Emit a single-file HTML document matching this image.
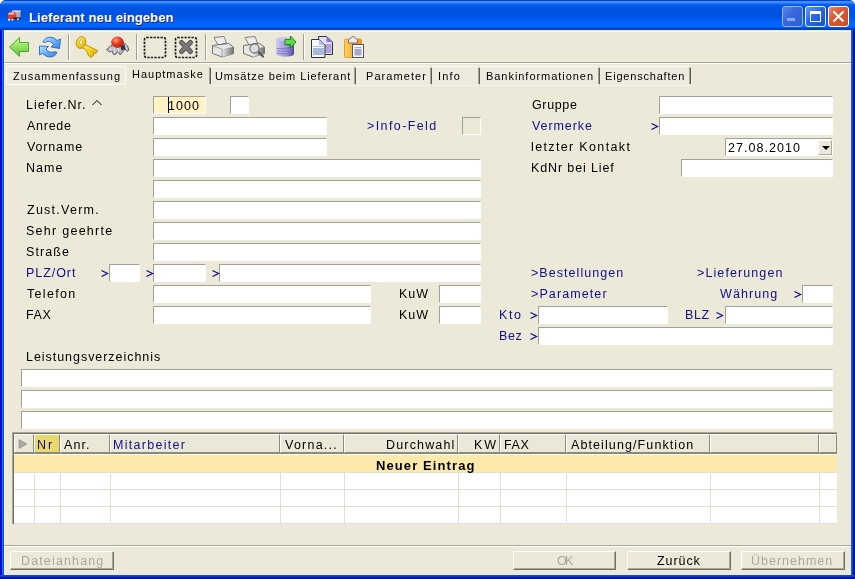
<!DOCTYPE html>
<html><head><meta charset="utf-8"><title>Lieferant neu eingeben</title>
<style>
html,body{margin:0;padding:0;width:855px;height:579px;overflow:hidden;background:#fff}
#win{position:absolute;left:0;top:0;width:855px;height:579px;background:#0842d6;border-radius:6px 6px 0 0;overflow:hidden}
#title{position:absolute;left:0;top:0;width:855px;height:30px;background:linear-gradient(180deg,#0a3fc8 0px,#0a3fc8 1px,#3d8dff 1px,#3d8dff 3px,#0b5ff2 4px,#0055e5 7px,#0052de 14px,#0058ea 19px,#0066ff 22px,#0066ff 27px,#0048d0 28px,#003cc0 30px)}
#client{position:absolute;left:4px;top:30px;width:847px;height:545px;background:#ECE9D8}
.t{position:absolute;font-family:"Liberation Sans",sans-serif;font-size:12.5px;letter-spacing:1.1px;line-height:14px;white-space:nowrap;color:#000;will-change:transform}
.tbold{font-weight:bold;font-size:13px}
.tt{position:absolute;font-family:"Liberation Sans",sans-serif;font-size:11px;letter-spacing:0.95px;line-height:14px;white-space:nowrap;color:#000;will-change:transform}
.i{position:absolute;height:18px;box-sizing:border-box;border-top:1px solid #a2a195;border-left:1px solid #a2a195;border-right:1px solid #fff;border-bottom:1px solid #fff;background:#fff}
.tb{position:absolute;top:0}
.sep{position:absolute;width:1px;top:34px;height:26px;background:#a09e92;border-right:1px solid #fff}
.btn{position:absolute;top:551px;height:19px;box-sizing:border-box;border:1px solid;border-color:#fff #716f64 #716f64 #fff;box-shadow:inset -1px -1px #aca899}
.tab{position:absolute;top:66px;height:19px;box-sizing:border-box;border-top:1px solid #fff}
.tdiv{position:absolute;top:67px;width:1px;height:17px;background:#77756a}
.gh{position:absolute;top:434px;height:19px;box-sizing:border-box;border:1px solid;border-color:#fff #8d8b80 #8d8b80 #fff;background:#ebe8d7}
.gv{position:absolute;top:472px;width:1px;height:52px;background:#e2e0d4}
.gr{position:absolute;left:14px;width:823px;height:1px;background:#e2e0d4}
</style></head><body><div id="win">
<div id="title"></div>
<div id="client"></div>
<div style="position:absolute;left:0;top:30px;width:4px;height:549px;background:linear-gradient(90deg,#0010d0 0,#0010d0 2px,#2266f4 2px,#2266f4 3px,#1152c4 3px,#1152c4 4px)"></div>
<div style="position:absolute;left:851px;top:30px;width:4px;height:549px;background:linear-gradient(90deg,#2a58c4 0,#2a58c4 1px,#1444c0 1px,#1444c0 2px,#0018a0 2px)"></div>
<div style="position:absolute;left:0;top:575px;width:855px;height:4px;background:linear-gradient(180deg,#1a48b8 0,#1a48b8 1px,#1438b8 1px,#1438b8 2px,#0018a0 2px)"></div>
<div style="position:absolute;left:4px;top:30px;width:1px;height:545px;background:#e8f2ff"></div>
<div style="position:absolute;left:850px;top:30px;width:1px;height:545px;background:#e0f0ff"></div>
<div style="position:absolute;left:849px;top:30px;width:1px;height:544px;background:#e6e6f0"></div>
<div style="position:absolute;left:4px;top:574px;width:847px;height:1px;background:#e0f0ff"></div>
<div style="position:absolute;left:5px;top:573px;width:845px;height:1px;background:#e6e6f0"></div>

<div style="position:absolute;left:29px;top:10px;font-family:'Liberation Sans',sans-serif;font-weight:bold;font-size:13px;letter-spacing:0.1px;line-height:16px;color:#fff;text-shadow:1px 1px #0a1e8c;white-space:nowrap">Lieferant neu eingeben</div>
<svg style="position:absolute;left:4px;top:6px" width="22" height="20" viewBox="4 6 22 20">
<rect x="12" y="10.5" width="8.5" height="7" fill="#b4aeb0"/><rect x="12" y="10.5" width="8.5" height="1.5" fill="#d8d4e0"/>
<path d="M8 13 L12 11.5 L15 12 L16.5 16 L16.5 19.5 L8 19.5 Z" fill="#d8402c"/>
<path d="M8.5 13 L12 12 L14 12.5 L14.5 14.5 L8.5 15 Z" fill="#e8b0b0"/>
<path d="M13 17.5 L21 17.5 L20 19.5 L14 19.5 Z" fill="#3a2020"/>
<rect x="8" y="19" width="2" height="1.5" fill="#fff"/><rect x="11.5" y="19" width="2" height="1.5" fill="#f0e0e0"/><rect x="17" y="18.5" width="2" height="1.2" fill="#fff"/>
</svg>
<div style="position:absolute;left:782px;top:6px;width:21px;height:21px;box-sizing:border-box;border:1px solid #98b4ee;border-radius:3px;background:linear-gradient(135deg,#5a86e6 0%,#3a68dc 40%,#2c5cd6 100%)"><div style="position:absolute;left:4px;top:11px;width:8px;height:3px;background:#8aa4ea"></div></div>
<div style="position:absolute;left:805px;top:6px;width:21px;height:21px;box-sizing:border-box;border:1px solid #e8f4ff;border-radius:3px;background:linear-gradient(135deg,#6a9af6 0%,#2a66ea 45%,#0a50e0 100%)"><div style="position:absolute;left:4px;top:4px;width:11px;height:11px;box-sizing:border-box;border:1px solid #fff;border-top-width:3px"></div></div>
<div style="position:absolute;left:828px;top:6px;width:21px;height:21px;box-sizing:border-box;border:1px solid #fff;border-radius:3px;background:linear-gradient(135deg,#ec8a68 0%,#dc5a34 40%,#d04820 100%)"><svg style="position:absolute;left:0;top:0" width="19" height="19"><path d="M4.5 4.5 L14.5 14.5 M14.5 4.5 L4.5 14.5" stroke="#fff" stroke-width="2" /></svg></div>
<div style="position:absolute;left:4px;top:31px;width:847px;height:1px;background:#fff;opacity:.6"></div>
<div style="position:absolute;left:4px;top:62px;width:847px;height:1px;background:#aca899"></div>
<div style="position:absolute;left:4px;top:63px;width:847px;height:1px;background:#fff"></div>
<div class="sep" style="left:68px"></div>
<div class="sep" style="left:136px"></div>
<div class="sep" style="left:205px"></div>
<div class="sep" style="left:303px"></div>

<svg style="position:absolute;left:4px;top:34px" width="28" height="26" viewBox="4 34 28 26">
<defs><linearGradient id="ga" x1="0" y1="0" x2="0" y2="1"><stop offset="0" stop-color="#c8f8a0"/><stop offset="0.5" stop-color="#90e060"/><stop offset="1" stop-color="#58c038"/></linearGradient></defs>
<path d="M9.5 47 L19.5 37.5 L19.5 42.5 L28.5 42.5 L28.5 51.5 L19.5 51.5 L19.5 56.5 Z" fill="url(#ga)" stroke="#4aa82a" stroke-width="1"/>
</svg>
<svg style="position:absolute;left:36px;top:34px" width="28" height="26" viewBox="0 0 28 26">
<defs><linearGradient id="gb" x1="0" y1="0" x2="1" y2="1"><stop offset="0" stop-color="#c0e6ff"/><stop offset="0.55" stop-color="#62acf8"/><stop offset="1" stop-color="#3080e0"/></linearGradient></defs>
<path d="M7 8 C9 3 16 1 21 6.5 L24.5 5 L23.5 14.5 L15 13 L17.5 10.5 C15 7 11 6.5 9.5 8.5 Z" fill="url(#gb)" stroke="#2a66c0" stroke-width="0.9"/>
<path d="M21 18.5 C19 23.5 12 25 6.5 19.5 L3.5 21 L3.5 12 L12.5 12.5 L10 15 C12 18.5 16 19 18.5 17.5 Z" fill="url(#gb)" stroke="#2a66c0" stroke-width="0.9"/>
</svg>
<svg style="position:absolute;left:72px;top:34px" width="28" height="26" viewBox="0 0 28 26">
<defs><linearGradient id="gk" x1="0" y1="0" x2="1" y2="1"><stop offset="0" stop-color="#fff27a"/><stop offset="0.5" stop-color="#f6d21c"/><stop offset="1" stop-color="#d8a808"/></linearGradient></defs>
<path d="M11 9.5 L25.5 16.5 L24 19.5 L21.5 18.5 L21.5 21.5 L18.5 23.5 L16.5 21.5 L15.5 19.5 L14.5 16.5 L10 13.5 Z" fill="url(#gk)" stroke="#b88a08" stroke-width="0.9"/>
<ellipse cx="9" cy="8.5" rx="4.6" ry="6" transform="rotate(20 9 8.5)" fill="url(#gk)" stroke="#b88a08" stroke-width="0.9"/>
<ellipse cx="9" cy="8.2" rx="1.6" ry="2.8" transform="rotate(20 9 8.2)" fill="#f8f0c0" stroke="#c89a10" stroke-width="0.6"/>
</svg>
<svg style="position:absolute;left:104px;top:34px" width="28" height="26" viewBox="0 0 28 26">
<defs><radialGradient id="gr" cx="0.35" cy="0.3" r="0.7"><stop offset="0" stop-color="#ffa080"/><stop offset="0.5" stop-color="#f04020"/><stop offset="1" stop-color="#c02010"/></radialGradient></defs>
<path d="M2.5 15.5 L6 12.5 L9 10.5 L13 12 L17 10 L20 8.5 L23.5 12 L25 16 L23 17.5 L21 15 L19.5 17 L16 21 L14 17 L12 20 L9.5 20.5 L8 17 L5.5 18 Z" fill="#b8b8c0" stroke="#404048" stroke-width="0.8"/>
<path d="M6 13.5 L7.5 17 M10 12 L10.5 19 M14 13 L14.5 18 M18 11 L19 15.5 M21 10.5 L23 15" stroke="#f0f0f4" stroke-width="0.9"/>
<path d="M16.5 12 L20.5 10 L21.5 15 L17.5 16.5 Z" fill="#303040"/>
<ellipse cx="13.5" cy="8.2" rx="6" ry="5.3" fill="url(#gr)" stroke="#a02818" stroke-width="0.5"/>
</svg>
<svg style="position:absolute;left:143px;top:36px" width="24" height="23" viewBox="0 0 24 23">
<rect x="1.5" y="1.5" width="21" height="20" rx="2" fill="none" stroke="#1a1a1a" stroke-width="1.7" stroke-dasharray="2.3 1.2"/>
</svg>
<svg style="position:absolute;left:174px;top:36px" width="24" height="23" viewBox="0 0 24 23">
<rect x="1.5" y="1.5" width="21" height="20" rx="2" fill="none" stroke="#1a1a1a" stroke-width="1.7" stroke-dasharray="2.3 1.2"/>
<path d="M7.5 6.5 L16.5 15.5 M16.5 6.5 L7.5 15.5" stroke="#555" stroke-width="5" stroke-linecap="round"/>
<path d="M7.5 6.5 L16.5 15.5 M16.5 6.5 L7.5 15.5" stroke="#7a7a7a" stroke-width="3" stroke-linecap="round"/>
</svg>
<svg style="position:absolute;left:209px;top:34px" width="28" height="26" viewBox="0 0 28 26">
<defs><linearGradient id="gp" x1="0" y1="0" x2="1" y2="0"><stop offset="0" stop-color="#e8e8e8"/><stop offset="1" stop-color="#707070"/></linearGradient></defs>
<path d="M5 3.5 L15 2.5 L17.5 9 L9 11 Z" fill="#ececec" stroke="#777" stroke-width="0.9"/>
<path d="M3.5 11.5 L19.5 9.5 L24.5 13 L24.5 19.5 L13 23 L3.5 19.5 Z" fill="#e6e6e6" stroke="#666" stroke-width="0.9"/>
<path d="M13 15 L24.5 13 L24.5 19.5 L13 23 Z" fill="url(#gp)"/>
<path d="M3.5 12 L13 15 L13 23" fill="none" stroke="#888" stroke-width="0.7"/>
</svg>
<svg style="position:absolute;left:240px;top:34px" width="28" height="26" viewBox="0 0 28 26">
<path d="M5 3.5 L15 2.5 L17.5 9 L9 11 Z" fill="#ececec" stroke="#777" stroke-width="0.9"/>
<path d="M3.5 11.5 L19.5 9.5 L24.5 13 L24.5 19.5 L13 23 L3.5 19.5 Z" fill="#e6e6e6" stroke="#666" stroke-width="0.9"/>
<path d="M13 15 L24.5 13 L24.5 19.5 L13 23 Z" fill="url(#gp)"/>
<path d="M19 18.5 L23 22.5" stroke="#555" stroke-width="2.2" stroke-linecap="round"/>
<circle cx="14.5" cy="14.5" r="4.6" fill="#dcdcdc" stroke="#555" stroke-width="1"/>
</svg>
<svg style="position:absolute;left:272px;top:34px" width="28" height="26" viewBox="0 0 28 26">
<defs><linearGradient id="gd" x1="0" y1="0" x2="1" y2="0"><stop offset="0" stop-color="#d0ccf4"/><stop offset="0.6" stop-color="#9890d8"/><stop offset="1" stop-color="#4a4290"/></linearGradient></defs>
<path d="M4 5 L4 20 C4 23.5 22 23.5 22 20 L22 5 Z" fill="url(#gd)"/>
<ellipse cx="13" cy="5" rx="9" ry="2" fill="#c8c4ee"/>
<path d="M5 14.5 L21 14.5 M5 17 L21 17 M5 19.5 L21 19.5" stroke="#7a72c0" stroke-width="0.8"/>
<path d="M13 5.5 L18.5 5.5 L18.5 2 L24 8 L18.5 14 L18.5 10.5 L13 10.5 Z" fill="#58e040" stroke="#1c7a1c" stroke-width="0.9"/>
</svg>
<svg style="position:absolute;left:308px;top:34px" width="28" height="26" viewBox="0 0 28 26">
<path d="M10.5 2.5 L18.5 2.5 L24.5 8 L24.5 20.5 L10.5 20.5 Z" fill="#e4def6" stroke="#333" stroke-width="1"/>
<path d="M18.5 2.5 L18.5 8 L24.5 8 Z" fill="#8a70d0"/>
<rect x="17" y="10" width="6.5" height="9" fill="#b4a0e0"/>
<path d="M3.5 5.5 L11 5.5 L17 11 L17 23.5 L3.5 23.5 Z" fill="#f6f8ff" stroke="#333" stroke-width="1"/>
<path d="M11 5.5 L11 11 L17 11 Z" fill="#b0c0e0"/>
<rect x="5" y="12" width="11" height="1" fill="#b8b8c0"/>
<rect x="5" y="14" width="11" height="7" fill="#a8bad8"/>
</svg>
<svg style="position:absolute;left:340px;top:34px" width="28" height="26" viewBox="0 0 28 26">
<defs><linearGradient id="go" x1="0" y1="0" x2="1" y2="0"><stop offset="0" stop-color="#ffd060"/><stop offset="1" stop-color="#f09010"/></linearGradient></defs>
<rect x="4.5" y="5" width="17" height="18.5" rx="1.5" fill="url(#go)" stroke="#e09020" stroke-width="0.8"/>
<path d="M8.5 9 L8.5 6 L13 2 L17.5 6 L17.5 9 Z" fill="#f0e8ee" stroke="#666" stroke-width="0.9"/>
<rect x="12.5" y="10.5" width="11" height="13" fill="#f8f8fc" stroke="#555" stroke-width="1"/>
<rect x="14.5" y="13" width="7" height="1.2" fill="#90b0c8"/>
<rect x="14.5" y="15" width="7" height="6.5" fill="#a8a8cc"/>
</svg>

<div class="tab" style="left:6px;width:120px;background:#eeebde;border-top:1px solid #fbfaf4;border-left:1px solid #fbfaf4;border-right:1px solid #fbfaf4;border-bottom:1px solid #fbfaf4"></div>
<div style="position:absolute;left:211px;top:66px;width:143px;height:18px;background:#eeebde;border-top:1px solid #faf9f2;border-bottom:1px solid #f6f5ec"></div>
<div style="position:absolute;left:356px;top:66px;width:74px;height:18px;background:#eeebde;border-top:1px solid #faf9f2;border-bottom:1px solid #f6f5ec"></div>
<div style="position:absolute;left:432px;top:66px;width:46px;height:18px;background:#eeebde;border-top:1px solid #faf9f2;border-bottom:1px solid #f6f5ec"></div>
<div style="position:absolute;left:480px;top:66px;width:118px;height:18px;background:#eeebde;border-top:1px solid #faf9f2;border-bottom:1px solid #f6f5ec"></div>
<div style="position:absolute;left:600px;top:66px;width:89px;height:18px;background:#eeebde;border-top:1px solid #faf9f2;border-bottom:1px solid #f6f5ec"></div>
<div style="position:absolute;left:209px;top:67px;width:1px;height:17px;background:#a6a497"></div><div class="tdiv" style="left:210px;top:68px;height:16px;background:#5e5c54"></div>
<div style="position:absolute;left:354px;top:67px;width:1px;height:17px;background:#a6a497"></div><div class="tdiv" style="left:355px;top:68px;height:16px;background:#5e5c54"></div>
<div style="position:absolute;left:430px;top:67px;width:1px;height:17px;background:#a6a497"></div><div class="tdiv" style="left:431px;top:68px;height:16px;background:#5e5c54"></div>
<div style="position:absolute;left:478px;top:67px;width:1px;height:17px;background:#a6a497"></div><div class="tdiv" style="left:479px;top:68px;height:16px;background:#5e5c54"></div>
<div style="position:absolute;left:598px;top:67px;width:1px;height:17px;background:#a6a497"></div><div class="tdiv" style="left:599px;top:68px;height:16px;background:#5e5c54"></div>
<div style="position:absolute;left:689px;top:67px;width:1px;height:17px;background:#a6a497"></div><div class="tdiv" style="left:690px;top:68px;height:16px;background:#5e5c54"></div>
<div class="tt" style="left:13px;top:69px;letter-spacing:0.964px;">Zusammenfassung</div>
<div class="tt" style="left:132px;top:67px;letter-spacing:1.0px;">Hauptmaske</div>
<div class="tt" style="left:215px;top:69px;letter-spacing:0.907px;">Umsätze beim Lieferant</div>
<div class="tt" style="left:366px;top:69px;letter-spacing:1.062px;">Parameter</div>
<div class="tt" style="left:438px;top:69px;letter-spacing:1.15px;">Info</div>
<div class="tt" style="left:486px;top:69px;letter-spacing:0.956px;">Bankinformationen</div>
<div class="tt" style="left:605px;top:69px;letter-spacing:0.8px;">Eigenschaften</div>
<div class="i" style="left:153px;top:96px;width:53px;background:#fff2c4;"></div>
<div class="i" style="left:230px;top:96px;width:19px;background:#fff;"></div>
<div class="i" style="left:153px;top:117px;width:174px;background:#fff;"></div>
<div class="i" style="left:153px;top:138px;width:174px;background:#fff;"></div>
<div class="i" style="left:153px;top:159px;width:328px;background:#fff;"></div>
<div class="i" style="left:153px;top:180px;width:328px;background:#fff;"></div>
<div class="i" style="left:153px;top:201px;width:328px;background:#fff;"></div>
<div class="i" style="left:153px;top:222px;width:328px;background:#fff;"></div>
<div class="i" style="left:153px;top:243px;width:328px;background:#fff;"></div>
<div class="i" style="left:109px;top:264px;width:31px;background:#fff;"></div>
<div class="i" style="left:153px;top:264px;width:53px;background:#fff;"></div>
<div class="i" style="left:219px;top:264px;width:262px;background:#fff;"></div>
<div class="i" style="left:153px;top:285px;width:218px;background:#fff;"></div>
<div class="i" style="left:439px;top:285px;width:42px;background:#fff;"></div>
<div class="i" style="left:153px;top:306px;width:218px;background:#fff;"></div>
<div class="i" style="left:439px;top:306px;width:42px;background:#fff;"></div>
<div class="i" style="left:462px;top:117px;width:19px;background:#ECE9D8;border-right:1px solid #fff;border-bottom:1px solid #fff"></div>
<div class="i" style="left:659px;top:96px;width:174px;background:#fff;"></div>
<div class="i" style="left:659px;top:117px;width:174px;background:#fff;"></div>
<div class="i" style="left:725px;top:138px;width:108px;background:#fff;"></div>
<div class="i" style="left:681px;top:159px;width:152px;background:#fff;"></div>
<div class="i" style="left:802px;top:285px;width:31px;background:#fff;"></div>
<div class="i" style="left:538px;top:306px;width:130px;background:#fff;"></div>
<div class="i" style="left:725px;top:306px;width:108px;background:#fff;"></div>
<div class="i" style="left:538px;top:327px;width:295px;background:#fff;"></div>
<div class="i" style="left:21px;top:369px;width:812px;background:#fff;"></div>
<div class="i" style="left:21px;top:390px;width:812px;background:#fff;"></div>
<div class="i" style="left:21px;top:411px;width:812px;background:#fff;"></div>
<div class="t" style="left:168px;top:99px;letter-spacing:1.05px;">1000</div>
<div style="position:absolute;left:168px;top:97px;width:1px;height:16px;background:#000"></div>
<div class="t" style="left:728px;top:141px;letter-spacing:1.05px;">27.08.2010</div>
<div style="position:absolute;left:818px;top:140px;width:14px;height:15px;box-sizing:border-box;background:#ece9d8;border:1px solid;border-color:#fff #aca899 #aca899 #fff"><div style="position:absolute;left:3px;top:5px;width:0;height:0;border-left:4px solid transparent;border-right:4px solid transparent;border-top:4px solid #000"></div></div>
<div class="t" style="left:26px;top:98px;letter-spacing:1.05px;">Liefer.Nr.</div>
<div class="t" style="left:27px;top:119px;letter-spacing:0.74px;">Anrede</div>
<div class="t" style="left:27px;top:140px;letter-spacing:0.85px;">Vorname</div>
<div class="t" style="left:26px;top:161px;letter-spacing:1.0px;">Name</div>
<div class="t" style="left:27px;top:203px;letter-spacing:1.25px;">Zust.Verm.</div>
<div class="t" style="left:26px;top:224px;letter-spacing:1.264px;">Sehr geehrte</div>
<div class="t" style="left:26px;top:245px;letter-spacing:1.1px;">Straße</div>
<div class="t" style="left:27px;top:287px;letter-spacing:1.3px;">Telefon</div>
<div class="t" style="left:26px;top:308px;letter-spacing:0.55px;">FAX</div>
<div class="t" style="left:26px;top:350px;letter-spacing:0.958px;">Leistungsverzeichnis</div>
<div class="t" style="left:399px;top:287px;letter-spacing:1.0px;">KuW</div>
<div class="t" style="left:399px;top:308px;letter-spacing:1.0px;">KuW</div>
<div class="t" style="left:532px;top:98px;letter-spacing:0.64px;">Gruppe</div>
<div class="t" style="left:531px;top:140px;letter-spacing:1.357px;">letzter Kontakt</div>
<div class="t" style="left:531px;top:161px;letter-spacing:0.875px;">KdNr bei Lief</div>
<div class="t" style="left:26px;top:266px;letter-spacing:0.95px;color:#10108a;">PLZ/Ort</div>
<svg style="position:absolute;left:100px;top:269px" width="10" height="9"><path d="M1.5 1.5 L7.5 4.5 L1.5 7.5" fill="none" stroke="#10108a" stroke-width="1.3"/></svg>
<svg style="position:absolute;left:145px;top:269px" width="10" height="9"><path d="M1.5 1.5 L7.5 4.5 L1.5 7.5" fill="none" stroke="#10108a" stroke-width="1.3"/></svg>
<svg style="position:absolute;left:211px;top:269px" width="10" height="9"><path d="M1.5 1.5 L7.5 4.5 L1.5 7.5" fill="none" stroke="#10108a" stroke-width="1.3"/></svg>
<div class="t" style="left:367px;top:119px;letter-spacing:1.4px;color:#10108a;">&gt;Info-Feld</div>
<div class="t" style="left:532px;top:119px;letter-spacing:0.921px;color:#10108a;">Vermerke</div>
<svg style="position:absolute;left:650px;top:122px" width="10" height="9"><path d="M1.5 1.5 L7.5 4.5 L1.5 7.5" fill="none" stroke="#10108a" stroke-width="1.3"/></svg>
<div class="t" style="left:531px;top:266px;letter-spacing:1.05px;color:#10108a;">&gt;Bestellungen</div>
<div class="t" style="left:697px;top:266px;letter-spacing:1.1px;color:#10108a;">&gt;Lieferungen</div>
<div class="t" style="left:531px;top:287px;letter-spacing:1.1px;color:#10108a;">&gt;Parameter</div>
<div class="t" style="left:720px;top:287px;letter-spacing:1.1px;color:#10108a;">Währung</div>
<svg style="position:absolute;left:793px;top:290px" width="10" height="9"><path d="M1.5 1.5 L7.5 4.5 L1.5 7.5" fill="none" stroke="#10108a" stroke-width="1.3"/></svg>
<div class="t" style="left:499px;top:308px;letter-spacing:1.55px;color:#10108a;">Kto</div>
<svg style="position:absolute;left:529px;top:311px" width="10" height="9"><path d="M1.5 1.5 L7.5 4.5 L1.5 7.5" fill="none" stroke="#10108a" stroke-width="1.3"/></svg>
<div class="t" style="left:685px;top:308px;letter-spacing:0.55px;color:#10108a;">BLZ</div>
<svg style="position:absolute;left:715px;top:311px" width="10" height="9"><path d="M1.5 1.5 L7.5 4.5 L1.5 7.5" fill="none" stroke="#10108a" stroke-width="1.3"/></svg>
<div class="t" style="left:499px;top:329px;letter-spacing:0.55px;color:#10108a;">Bez</div>
<svg style="position:absolute;left:529px;top:332px" width="10" height="9"><path d="M1.5 1.5 L7.5 4.5 L1.5 7.5" fill="none" stroke="#10108a" stroke-width="1.3"/></svg>
<svg style="position:absolute;left:91px;top:98px" width="12" height="9"><path d="M1.5 7 L6 2.5 L10.5 7" fill="none" stroke="#000" stroke-width="1"/></svg>
<div style="position:absolute;left:12px;top:432px;width:825px;height:92px;box-sizing:border-box;border-top:1px solid #aca899;border-left:1px solid #aca899;background:#fff"><div style="position:absolute;left:0;top:0;right:0;bottom:0;border-top:1px solid #716f64;border-left:1px solid #716f64"></div></div>
<div style="position:absolute;left:14px;top:455px;width:823px;height:17px;background:#fde9ac"></div>
<div class="gh" style="left:14px;width:20px;background:#ebe8d7"></div>
<div class="gh" style="left:34px;width:26px;background:#e9d96c"></div>
<div class="gh" style="left:60px;width:50px;background:#ebe8d7"></div>
<div class="gh" style="left:110px;width:170px;background:#ebe8d7"></div>
<div class="gh" style="left:280px;width:64px;background:#ebe8d7"></div>
<div class="gh" style="left:344px;width:114px;background:#ebe8d7"></div>
<div class="gh" style="left:458px;width:42px;background:#ebe8d7"></div>
<div class="gh" style="left:500px;width:66px;background:#ebe8d7"></div>
<div class="gh" style="left:566px;width:144px;background:#ebe8d7"></div>
<div class="gh" style="left:710px;width:109px;background:#ebe8d7"></div>
<div class="gh" style="left:819px;width:18px;background:#ebe8d7"></div>
<div class="gv" style="left:34px"></div>
<div class="gv" style="left:60px"></div>
<div class="gv" style="left:110px"></div>
<div class="gv" style="left:280px"></div>
<div class="gv" style="left:344px"></div>
<div class="gv" style="left:458px"></div>
<div class="gv" style="left:500px"></div>
<div class="gv" style="left:566px"></div>
<div class="gv" style="left:710px"></div>
<div class="gv" style="left:819px"></div>
<div class="gr" style="top:472px"></div>
<div class="gr" style="top:489px"></div>
<div class="gr" style="top:506px"></div>
<div class="gr" style="top:523px"></div>
<div style="position:absolute;left:13px;top:453px;width:824px;height:1px;background:#8a887c"></div>
<svg style="position:absolute;left:17px;top:438px" width="12" height="12"><path d="M2 1.5 L10 6 L2 10.5 Z" fill="#aaa8a0" stroke="#888" stroke-width="0.6"/></svg>
<div class="t" style="left:37px;top:438px;letter-spacing:1.9px;color:#10108a;">Nr</div>
<div class="t" style="left:64px;top:438px;letter-spacing:1.05px;">Anr.</div>
<div class="t" style="left:113px;top:438px;letter-spacing:1.28px;color:#10108a;">Mitarbeiter</div>
<div class="t" style="left:285px;top:438px;letter-spacing:1.229px;">Vorna...</div>
<div class="t" style="left:386px;top:438px;letter-spacing:1.162px;">Durchwahl</div>
<div class="t" style="left:474px;top:438px;letter-spacing:1.9px;">KW</div>
<div class="t" style="left:504px;top:438px;letter-spacing:0.55px;">FAX</div>
<div class="t" style="left:571px;top:438px;letter-spacing:1.1px;">Abteilung/Funktion</div>
<div class="t tbold" style="left:376px;top:459px;letter-spacing:1.1px;">Neuer Eintrag</div>
<div style="position:absolute;left:4px;top:545px;width:847px;height:1px;background:#aca899"></div>
<div style="position:absolute;left:4px;top:546px;width:847px;height:1px;background:#fff"></div>
<div class="btn" style="left:10px;width:104px"></div>
<div class="t" style="left:21px;top:554px;letter-spacing:1.14px;color:#aca899;">Dateianhang</div>
<div class="btn" style="left:513px;width:103px"></div>
<div class="t" style="left:557px;top:554px;letter-spacing:-1.7px;color:#aca899;">OK</div>
<div class="btn" style="left:627px;width:104px"></div>
<div class="t" style="left:657px;top:554px;letter-spacing:0.92px;color:#000;">Zurück</div>
<div class="btn" style="left:741px;width:104px"></div>
<div class="t" style="left:751px;top:554px;letter-spacing:1.0px;color:#aca899;">Übernehmen</div>
</div></body></html>
